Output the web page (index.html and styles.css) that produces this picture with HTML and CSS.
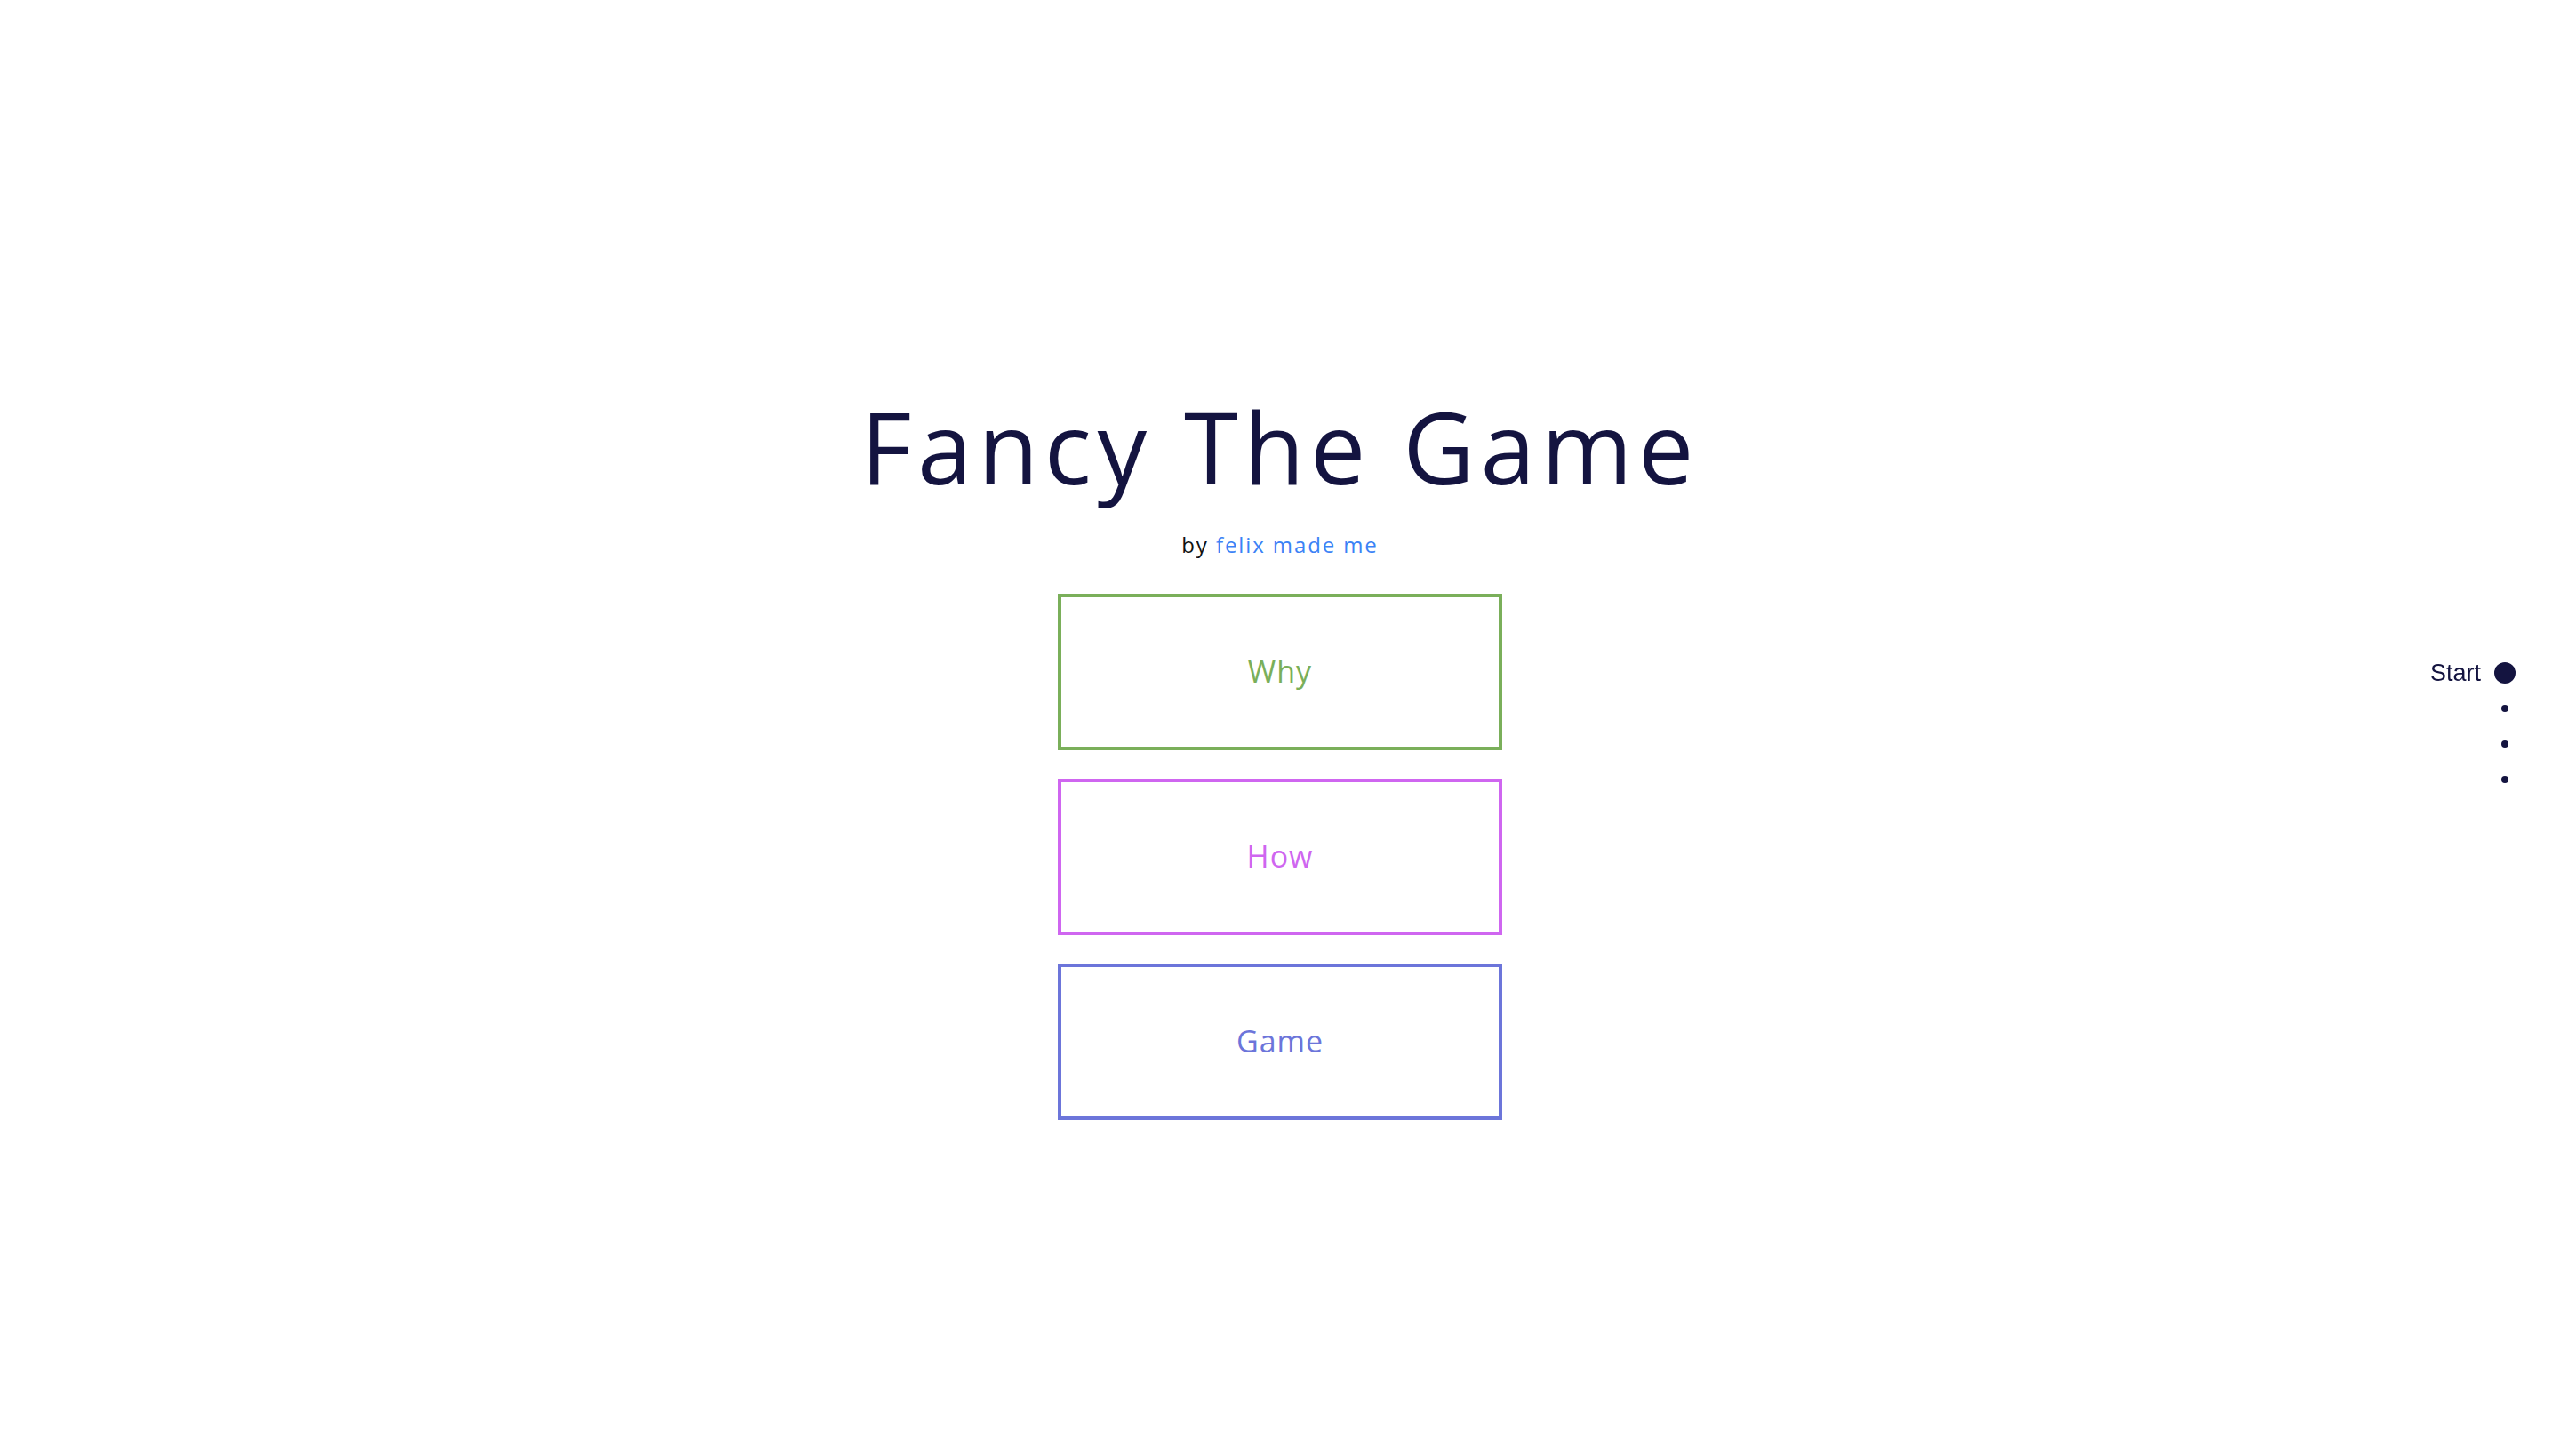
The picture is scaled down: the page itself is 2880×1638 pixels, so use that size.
FILE: index.html
```html
<!DOCTYPE html>
<html lang="en">
<head>
<meta charset="utf-8">
<title>Fancy The Game</title>
<link rel="stylesheet" href="styles.css">
</head>
<body>
<main class="page">
  <h1 class="title">Fancy The Game</h1>
  <p class="byline">by <a class="byline-link" href="#">felix made me</a></p>
  <div class="menu">
    <a class="menu-btn menu-why" href="#">Why</a>
    <a class="menu-btn menu-how" href="#">How</a>
    <a class="menu-btn menu-game" href="#">Game</a>
  </div>
</main>
<nav class="side-nav">
  <ul class="side-list">
    <li class="side-item active"><span class="side-label">Start</span><span class="side-dot-wrap"><span class="side-dot"></span></span></li>
    <li class="side-item"><span class="side-dot-wrap"><span class="side-dot"></span></span></li>
    <li class="side-item"><span class="side-dot-wrap"><span class="side-dot"></span></span></li>
    <li class="side-item"><span class="side-dot-wrap"><span class="side-dot"></span></span></li>
  </ul>
</nav>
</body>
</html>
```

FILE: styles.css
```css
html, body {
  margin: 0;
  padding: 0;
  background: #ffffff;
}

body {
  font-family: "Open Sans", "Noto Sans", sans-serif;
  color: #141440;
  height: 100vh;
  overflow: hidden;
}

.page {
  height: 100vh;
  box-sizing: border-box;
  padding-top: 447px;
  display: flex;
  flex-direction: column;
  align-items: center;
}

.title {
  margin: 0;
  font-size: 111px;
  line-height: 111px;
  font-weight: 400;
  color: #141440;
  letter-spacing: 6.5px;
  white-space: nowrap;
}

.byline {
  margin: 43px 0 0;
  font-size: 24px;
  line-height: 24px;
  color: #111111;
  letter-spacing: 1.9px;
}

.byline-link {
  color: #3b82f6;
  text-decoration: none;
}

.menu {
  margin-top: 43px;
  display: flex;
  flex-direction: column;
  gap: 32px;
}

.menu-btn {
  box-sizing: border-box;
  width: 500px;
  height: 176px;
  padding-bottom: 3px;
  border: 4px solid currentColor;
  display: flex;
  align-items: center;
  justify-content: center;
  font-size: 34px;
  letter-spacing: 1px;
  text-decoration: none;
}

.menu-why { color: #7aaf5a; }
.menu-how { color: #cf66f0; }
.menu-game { color: #6c75da; }

.side-nav {
  position: fixed;
  right: 50px;
  top: calc(50% - 2px);
  transform: translateY(-50%);
}

.side-list {
  list-style: none;
  margin: 0;
  padding: 0;
}

.side-item {
  height: 40px;
  display: flex;
  align-items: center;
  justify-content: flex-end;
}

.side-label {
  font-family: "Liberation Sans", Arial, sans-serif;
  font-size: 27px;
  color: #141440;
  margin-right: 15px;
}

.side-dot-wrap {
  width: 24px;
  height: 24px;
  display: flex;
  align-items: center;
  justify-content: center;
}

.side-dot {
  width: 8px;
  height: 8px;
  border-radius: 50%;
  background: #141440;
}

.side-item.active .side-dot {
  width: 24px;
  height: 24px;
}
```
